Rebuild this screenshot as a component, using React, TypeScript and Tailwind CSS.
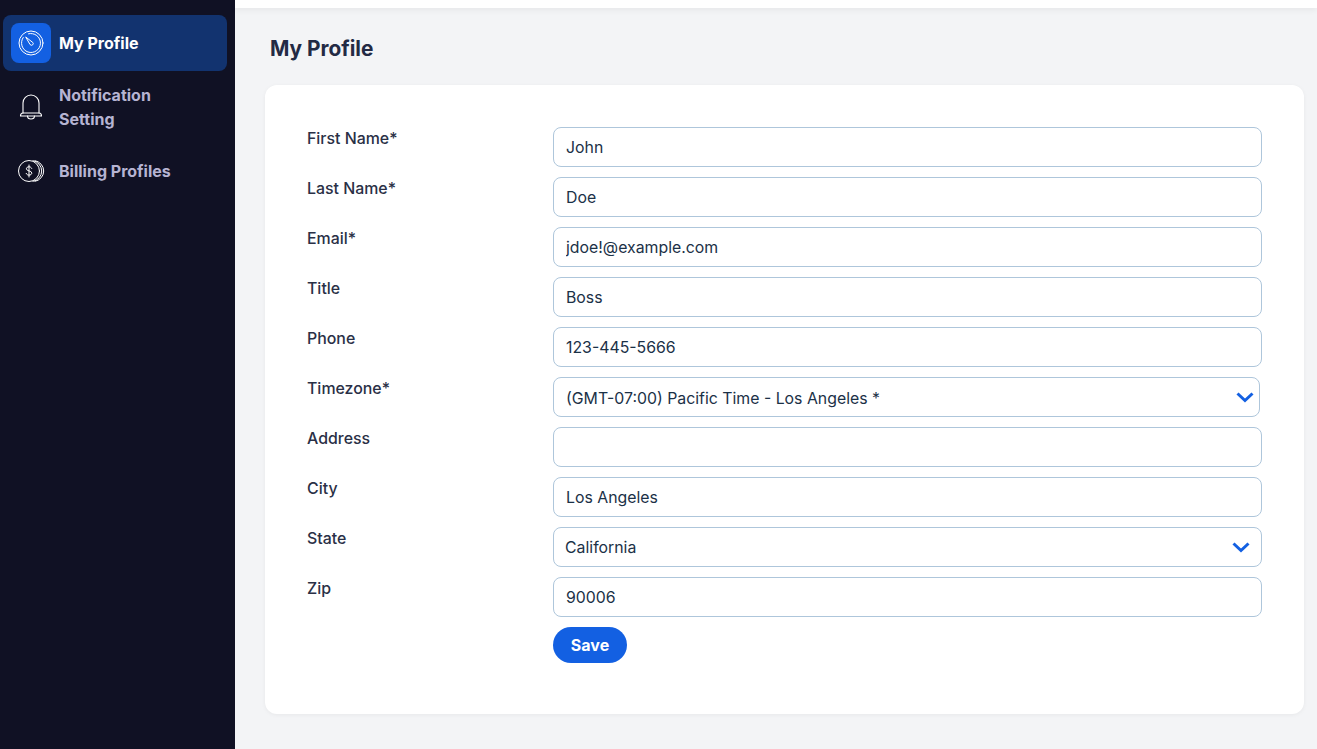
import { useState } from "react";

const font = "font-['Inter','Liberation_Sans',sans-serif]";

function TimerIcon() {
  return (
    <svg width="32" height="32" viewBox="0 0 32 32" fill="none" stroke="#fff" strokeWidth="1" strokeLinecap="round" strokeLinejoin="round">
      <circle cx="16" cy="16" r="12" />
      <path d="M13.500 6.800A9.500 9.500 0 1 1 8.200 10.500" />
      <path d="M11 10.200l6.800 5.300a1.700 1.700 0 0 1-2.500 2.300z" />
    </svg>
  );
}

function BellIcon() {
  return (
    <svg width="32" height="32" viewBox="0 0 32 32" fill="none" stroke="#fff" strokeWidth="1.1" strokeLinecap="round" strokeLinejoin="round" className="mt-[2px] shrink-0">
      <path d="M8 21V11a8 8 0 0 1 16 0v10" />
      <path d="M5.500 24c0-1.800 1-3 2.500-3h16c1.500 0 2.500 1.200 2.500 3z" />
      <path d="M12.500 24a3.500 3 0 0 0 7 0" />
    </svg>
  );
}

function CoinsIcon() {
  return (
    <svg width="32" height="32" viewBox="0 0 32 32" fill="none" stroke="#fff" strokeWidth="1" strokeLinecap="round" className="shrink-0">
      <circle cx="14" cy="15" r="10.500" />
      <path d="M18 4.660A10.500 10.500 0 0 1 18 25.340" />
      <path d="M20 4.660A10.500 10.500 0 0 1 20 25.340" />
      <path d="M16.700 12.400c-.4-1-1.400-1.600-2.700-1.600-1.500 0-2.600.8-2.600 2 0 2.800 5.400 1.400 5.400 4.300 0 1.200-1.200 2-2.800 2-1.400 0-2.500-.6-2.800-1.700" />
      <path d="M14 9v12" />
    </svg>
  );
}

function Chevron({ pos }: { pos: string }) {
  return (
    <svg width="18" height="11" viewBox="0 0 18 11" fill="none" stroke="#1360e2" strokeWidth="3" className={`pointer-events-none absolute top-[15px] ${pos}`}>
      <path d="M1.500 1.500L9 8.500l7.500-7" />
    </svg>
  );
}

function TextRow({ label, value }: { label: string; value: string }) {
  const [val, setVal] = useState(value);
  return (
    <div className="flex h-[50px]">
      <label className="w-[246px] pt-[1px] text-[15.9px] leading-[22px] font-medium text-[#2a3046]">{label}</label>
      <input
        type="text"
        value={val}
        onChange={(e) => setVal(e.target.value)}
        className="h-10 w-[709px] rounded-lg border border-[#aec6db] bg-white px-3 text-[15.85px] text-[#1b3147] outline-none"
      />
    </div>
  );
}

function SelectRow({ label, value, wide, pad, chevron }: { label: string; value: string; wide: string; pad: string; chevron: string }) {
  return (
    <div className="flex h-[50px]">
      <label className="w-[246px] pt-[1px] text-[15.9px] leading-[22px] font-medium text-[#2a3046]">{label}</label>
      <div className={`relative h-10 ${wide}`}>
        <select
          defaultValue={value}
          className={`h-10 w-full appearance-none rounded-lg border border-[#aec6db] bg-white text-[15.85px] text-[#1b3147] outline-none ${pad}`}
        >
          <option>{value}</option>
        </select>
        <Chevron pos={chevron} />
      </div>
    </div>
  );
}

export default function App() {
  return (
    <div className={`flex h-[749px] overflow-hidden bg-[#f3f4f6] ${font}`}>
      <aside className="w-[235px] shrink-0 bg-[#101124] pt-[15px] pl-[3px] pr-2">
        <div className="flex h-14 items-center gap-2 rounded-lg bg-[#12336f] pl-2">
          <div className="flex h-10 w-10 items-center justify-center rounded-lg bg-[#1360e2]">
            <TimerIcon />
          </div>
          <span className="text-base font-bold text-white">My Profile</span>
        </div>
        <div className="mt-3 flex items-center gap-3 pl-3">
          <BellIcon />
          <span className="w-[130px] text-base leading-6 font-bold text-[#b6b4d2]">Notification Setting</span>
        </div>
        <div className="mt-[25px] flex items-center gap-3 pl-3">
          <CoinsIcon />
          <span className="mb-[2px] text-base font-bold text-[#b6b4d2]">Billing Profiles</span>
        </div>
      </aside>
      <main className="min-w-0 flex-1">
        <div className="h-2 bg-white shadow-[0_2px_6px_rgba(0,0,0,0.06)]" />
        <h1 className="mt-[25px] ml-[35px] text-[20.8px] leading-8 font-bold text-[#232a44]">My Profile</h1>
        <section className="mt-[20px] ml-[30px] h-[629px] w-[1039px] rounded-xl bg-white pt-[42px] pl-[42px] shadow-[0_1px_4px_rgba(0,0,0,0.05)]">
          <TextRow label="First Name*" value="John" />
          <TextRow label="Last Name*" value="Doe" />
          <TextRow label="Email*" value="jdoe!@example.com" />
          <TextRow label="Title" value="Boss" />
          <TextRow label="Phone" value="123-445-5666" />
          <SelectRow label="Timezone*" value="(GMT-07:00) Pacific Time - Los Angeles *" wide="w-[707px]" pad="pl-3 pt-[3px]" chevron="right-[6px]" />
          <TextRow label="Address" value="" />
          <TextRow label="City" value="Los Angeles" />
          <SelectRow label="State" value="California" wide="w-[709px]" pad="pl-[11px] pt-[1px]" chevron="right-[12px]" />
          <TextRow label="Zip" value="90006" />
          <button className="ml-[246px] h-9 w-[74px] rounded-full bg-[#1360e2] text-base font-bold text-white">Save</button>
        </section>
      </main>
    </div>
  );
}
